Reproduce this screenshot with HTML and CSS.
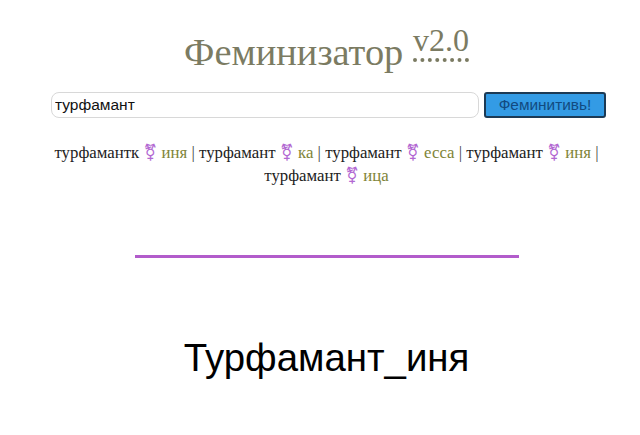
FILE: index.html
```html
<!DOCTYPE html>
<html lang="ru">
<head>
<meta charset="utf-8">
<title>Феминизатор</title>
<link rel="stylesheet" href="styles.css">
</head>
<body>
<main class="page">
<h1 class="title">Феминизатор <sup class="version">v2.0</sup></h1>
<form class="search">
<input class="search-input" type="text" value="турфамант">
<button class="search-button" type="button">Феминитивь!</button>
</form>
<p class="variants">турфамантк <span class="sign">⚧</span> <span class="suffix">иня</span> <span class="sep">|</span> турфамант <span class="sign">⚧</span> <span class="suffix">ка</span> <span class="sep">|</span> турфамант <span class="sign">⚧</span> <span class="suffix">есса</span> <span class="sep">|</span> турфамант <span class="sign">⚧</span> <span class="suffix">иня</span> <span class="sep">|</span> турфамант <span class="sign">⚧</span> <span class="suffix">ица</span></p>
<hr class="rule">
<div class="result">Турфамант_иня</div>
</main>
</body>
</html>
```
FILE: styles.css
```css
html, body { margin: 0; padding: 0; background: #fff; }
body { width: 640px; height: 435px; overflow: hidden; font-family: "Liberation Serif", serif; }
.page { width: 627px; margin-left: 13px; }
.title { margin: 0; padding-top: 31px; height: 43px; line-height: 43px; text-align: center; font-weight: 400; font-size: 38.4px; color: #7b7b62; white-space: nowrap; }
.version { font-size: 32px; line-height: 0; vertical-align: 14px; border-bottom: 4px dotted #7b7b62; }
.search { display: flex; gap: 5px; margin: 18px 0 0 38px; }
.search-input { box-sizing: border-box; width: 428px; height: 26px; padding: 0 3px; border: 1px solid #d8d8d8; border-radius: 8px; font: 15.5px "Liberation Sans", sans-serif; color: #111; outline: none; }
.search-button { box-sizing: border-box; width: 122px; height: 26px; padding: 0; background: #339be5; border: 2px solid #1c3a55; border-radius: 3px; font: 15.4px "Liberation Sans", sans-serif; color: #124a80; }
.variants { margin: 23px 20px 0; font-size: 16.8px; line-height: 22px; text-align: center; color: #222; }
.sign { color: #b268d2; font-family: "DejaVu Sans", sans-serif; }
.suffix { color: #7f8438; }
.sep { color: #444; }
.rule { width: 384px; height: 3px; margin: 68px auto 0; border: 0; background: #b25ccb; }
.result { margin-top: 70px; text-align: center; font: 38.4px/60px "Liberation Sans", sans-serif; color: #000; }
```
